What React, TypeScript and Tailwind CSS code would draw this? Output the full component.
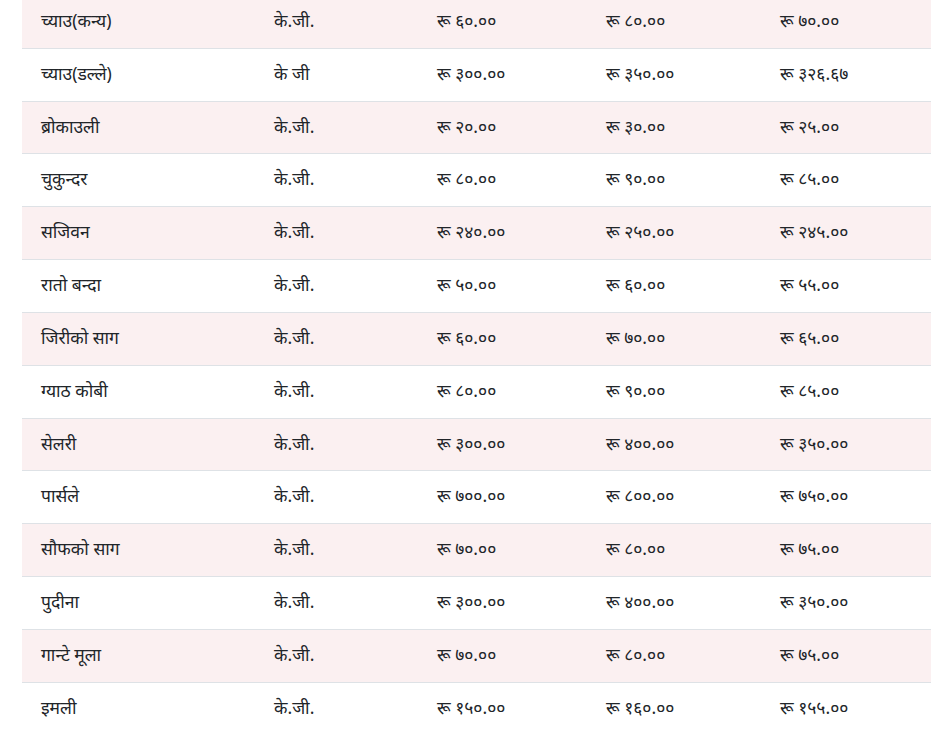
const rows: [string, string, string, string, string][] = [
  ["च्याउ(कन्य)", "के.जी.", "रू ६०.००", "रू ८०.००", "रू ७०.००"],
  ["च्याउ(डल्ले)", "के जी", "रू ३००.००", "रू ३५०.००", "रू ३२६.६७"],
  ["ब्रोकाउली", "के.जी.", "रू २०.००", "रू ३०.००", "रू २५.००"],
  ["चुकुन्दर", "के.जी.", "रू ८०.००", "रू ९०.००", "रू ८५.००"],
  ["सजिवन", "के.जी.", "रू २४०.००", "रू २५०.००", "रू २४५.००"],
  ["रातो बन्दा", "के.जी.", "रू ५०.००", "रू ६०.००", "रू ५५.००"],
  ["जिरीको साग", "के.जी.", "रू ६०.००", "रू ७०.००", "रू ६५.००"],
  ["ग्याठ कोबी", "के.जी.", "रू ८०.००", "रू ९०.००", "रू ८५.००"],
  ["सेलरी", "के.जी.", "रू ३००.००", "रू ४००.००", "रू ३५०.००"],
  ["पार्सले", "के.जी.", "रू ७००.००", "रू ८००.००", "रू ७५०.००"],
  ["सौफको साग", "के.जी.", "रू ७०.००", "रू ८०.००", "रू ७५.००"],
  ["पुदीना", "के.जी.", "रू ३००.००", "रू ४००.००", "रू ३५०.००"],
  ["गान्टे मूला", "के.जी.", "रू ७०.००", "रू ८०.००", "रू ७५.००"],
  ["इमली", "के.जी.", "रू १५०.००", "रू १६०.००", "रू १५५.००"],
];

export default function App() {
  return (
    <div className="min-h-screen bg-white pl-[22px] pr-[19px] overflow-hidden">
      <div className="-mt-[4px] text-[#212529] text-[17.5px]" style={{ fontFamily: '"Noto Sans", "Noto Sans Devanagari", sans-serif' }}>
        {rows.map((r, i) => (
          <div
            key={i}
            className={`grid grid-cols-[233px_163px_169px_174px_1fr] h-[52.83px] pb-[4px] items-center border-b border-[#dee2e6] ${
              i % 2 === 0 ? "bg-[#fbf0f1]" : "bg-white"
            } ${i === rows.length - 1 ? "border-b-0" : ""}`}
          >
            {r.map((c, j) => (
              <div key={j} className="pl-[19px] leading-6 whitespace-nowrap">
                {c}
              </div>
            ))}
          </div>
        ))}
      </div>
    </div>
  );
}
